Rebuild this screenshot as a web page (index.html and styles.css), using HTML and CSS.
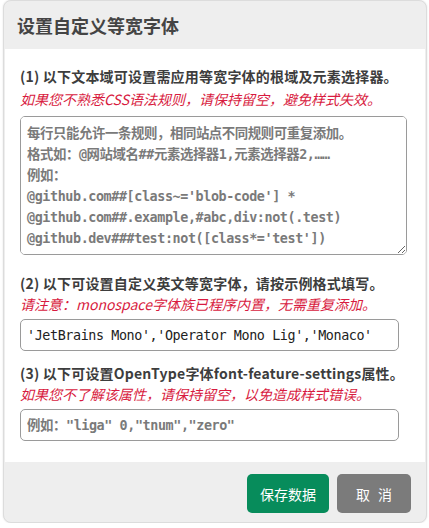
FILE: index.html
```html
<!DOCTYPE html>
<html lang="zh-CN">
<head>
<meta charset="utf-8">
<title>设置自定义等宽字体</title>
<link rel="stylesheet" href="styles.css">
</head>
<body>
<div class="dialog">
  <div class="dialog-header">
    <h2 class="dialog-title">设置自定义等宽字体</h2>
  </div>
  <div class="dialog-body">
    <div class="field field-first">
      <p class="label">(1) 以下文本域可设置需应用等宽字体的根域及元素选择器。</p>
      <p class="hint">如果您不熟悉CSS语法规则，请保持留空，避免样式失效。</p>
      <textarea class="textarea" placeholder="每行只能允许一条规则，相同站点不同规则可重复添加。&#10;格式如：@网站域名##元素选择器1,元素选择器2,……&#10;例如：&#10;@github.com##[class~='blob-code'] *&#10;@github.com##.example,#abc,div:not(.test)&#10;@github.dev###test:not([class*='test'])"></textarea>
    </div>
    <div class="field field-second">
      <p class="label">(2) 以下可设置自定义英文等宽字体，请按示例格式填写。</p>
      <p class="hint">请注意：monospace字体族已程序内置，无需重复添加。</p>
      <input class="input" type="text" value="'JetBrains Mono','Operator Mono Lig','Monaco'">
    </div>
    <div class="field field-third">
      <p class="label">(3) 以下可设置OpenType字体font-feature-settings属性。</p>
      <p class="hint">如果您不了解该属性，请保持留空，以免造成样式错误。</p>
      <input class="input" type="text" placeholder="例如：&quot;liga&quot; 0,&quot;tnum&quot;,&quot;zero&quot;">
    </div>
  </div>
  <div class="dialog-footer">
    <button class="btn btn-save" type="button">保存数据</button>
    <button class="btn btn-cancel" type="button">取 消</button>
  </div>
</div>
</body>
</html>
```
FILE: styles.css
```css
html, body {
  margin: 0;
  padding: 0;
  background: #ffffff;
}

body {
  font-family: "Noto Sans CJK SC", "Noto Sans", sans-serif;
}

.dialog {
  box-sizing: border-box;
  margin: 0 0 0 3px;
  width: 424px;
  height: 523px;
  display: flex;
  flex-direction: column;
  background: #eeeeee;
  border: 1px solid #dcdcdc;
  border-radius: 8px;
  box-shadow: 0 0 2px rgba(0, 0, 0, 0.12);
  overflow: hidden;
}

.dialog-header {
  height: 48px;
  padding: 0 13px;
  flex: none;
}

.dialog-title {
  margin: 0;
  font-size: 18px;
  line-height: 48px;
  font-weight: bold;
  color: #444444;
}

.dialog-body {
  flex: none;
  height: 413px;
  box-sizing: border-box;
  margin: 0 1px;
  background: #ffffff;
  padding: 17px 15px 21px;
}

.field {
  display: flex;
  flex-direction: column;
  align-items: flex-start;
}

.field-second {
  margin-top: 18px;
}

.field-third {
  margin-top: 12px;
}

.label {
  margin: 0;
  font-size: 14px;
  line-height: 21px;
  font-weight: bold;
  color: #3d3d3d;
  white-space: nowrap;
  letter-spacing: 0.2px;
}

.hint {
  margin: 0;
  font-size: 14px;
  line-height: 21px;
  font-style: italic;
  color: #d81b40;
  white-space: nowrap;
}

.field-first .hint {
  margin-top: 2px;
}

.textarea,
.input {
  box-sizing: border-box;
  font-family: "DejaVu Sans Mono", "Noto Sans CJK SC", monospace;
  font-size: 13.4px;
  letter-spacing: -0.4px;
  color: #222222;
  border: 1px solid #9a9a9a;
  border-radius: 5px;
  background: #ffffff;
  outline: none;
}

.textarea {
  display: block;
  margin-top: 6px;
  width: 387px;
  height: 139px;
  padding: 6px 6px;
  line-height: 21px;
  resize: both;
}

.input {
  display: block;
  margin-top: 4px;
  width: 379px;
  height: 32px;
  padding: 0 6px;
  line-height: 30px;
}

.textarea::placeholder,
.input::placeholder {
  color: #7a7a7a;
  font-weight: bold;
  opacity: 1;
}

.dialog-footer {
  flex: 1;
  display: flex;
  justify-content: flex-end;
  align-items: flex-start;
  gap: 8px;
  padding: 12px 15px 0;
}

.btn {
  height: 39px;
  border: none;
  border-radius: 5px;
  font-family: "Noto Sans CJK SC", "Noto Sans", sans-serif;
  font-size: 14px;
  color: #ffffff;
  padding: 0;
  cursor: pointer;
}

.btn-save {
  width: 82px;
  background: #078c5b;
}

.btn-cancel {
  width: 74px;
  background: #7b7b7b;
  word-spacing: 5px;
}
```
